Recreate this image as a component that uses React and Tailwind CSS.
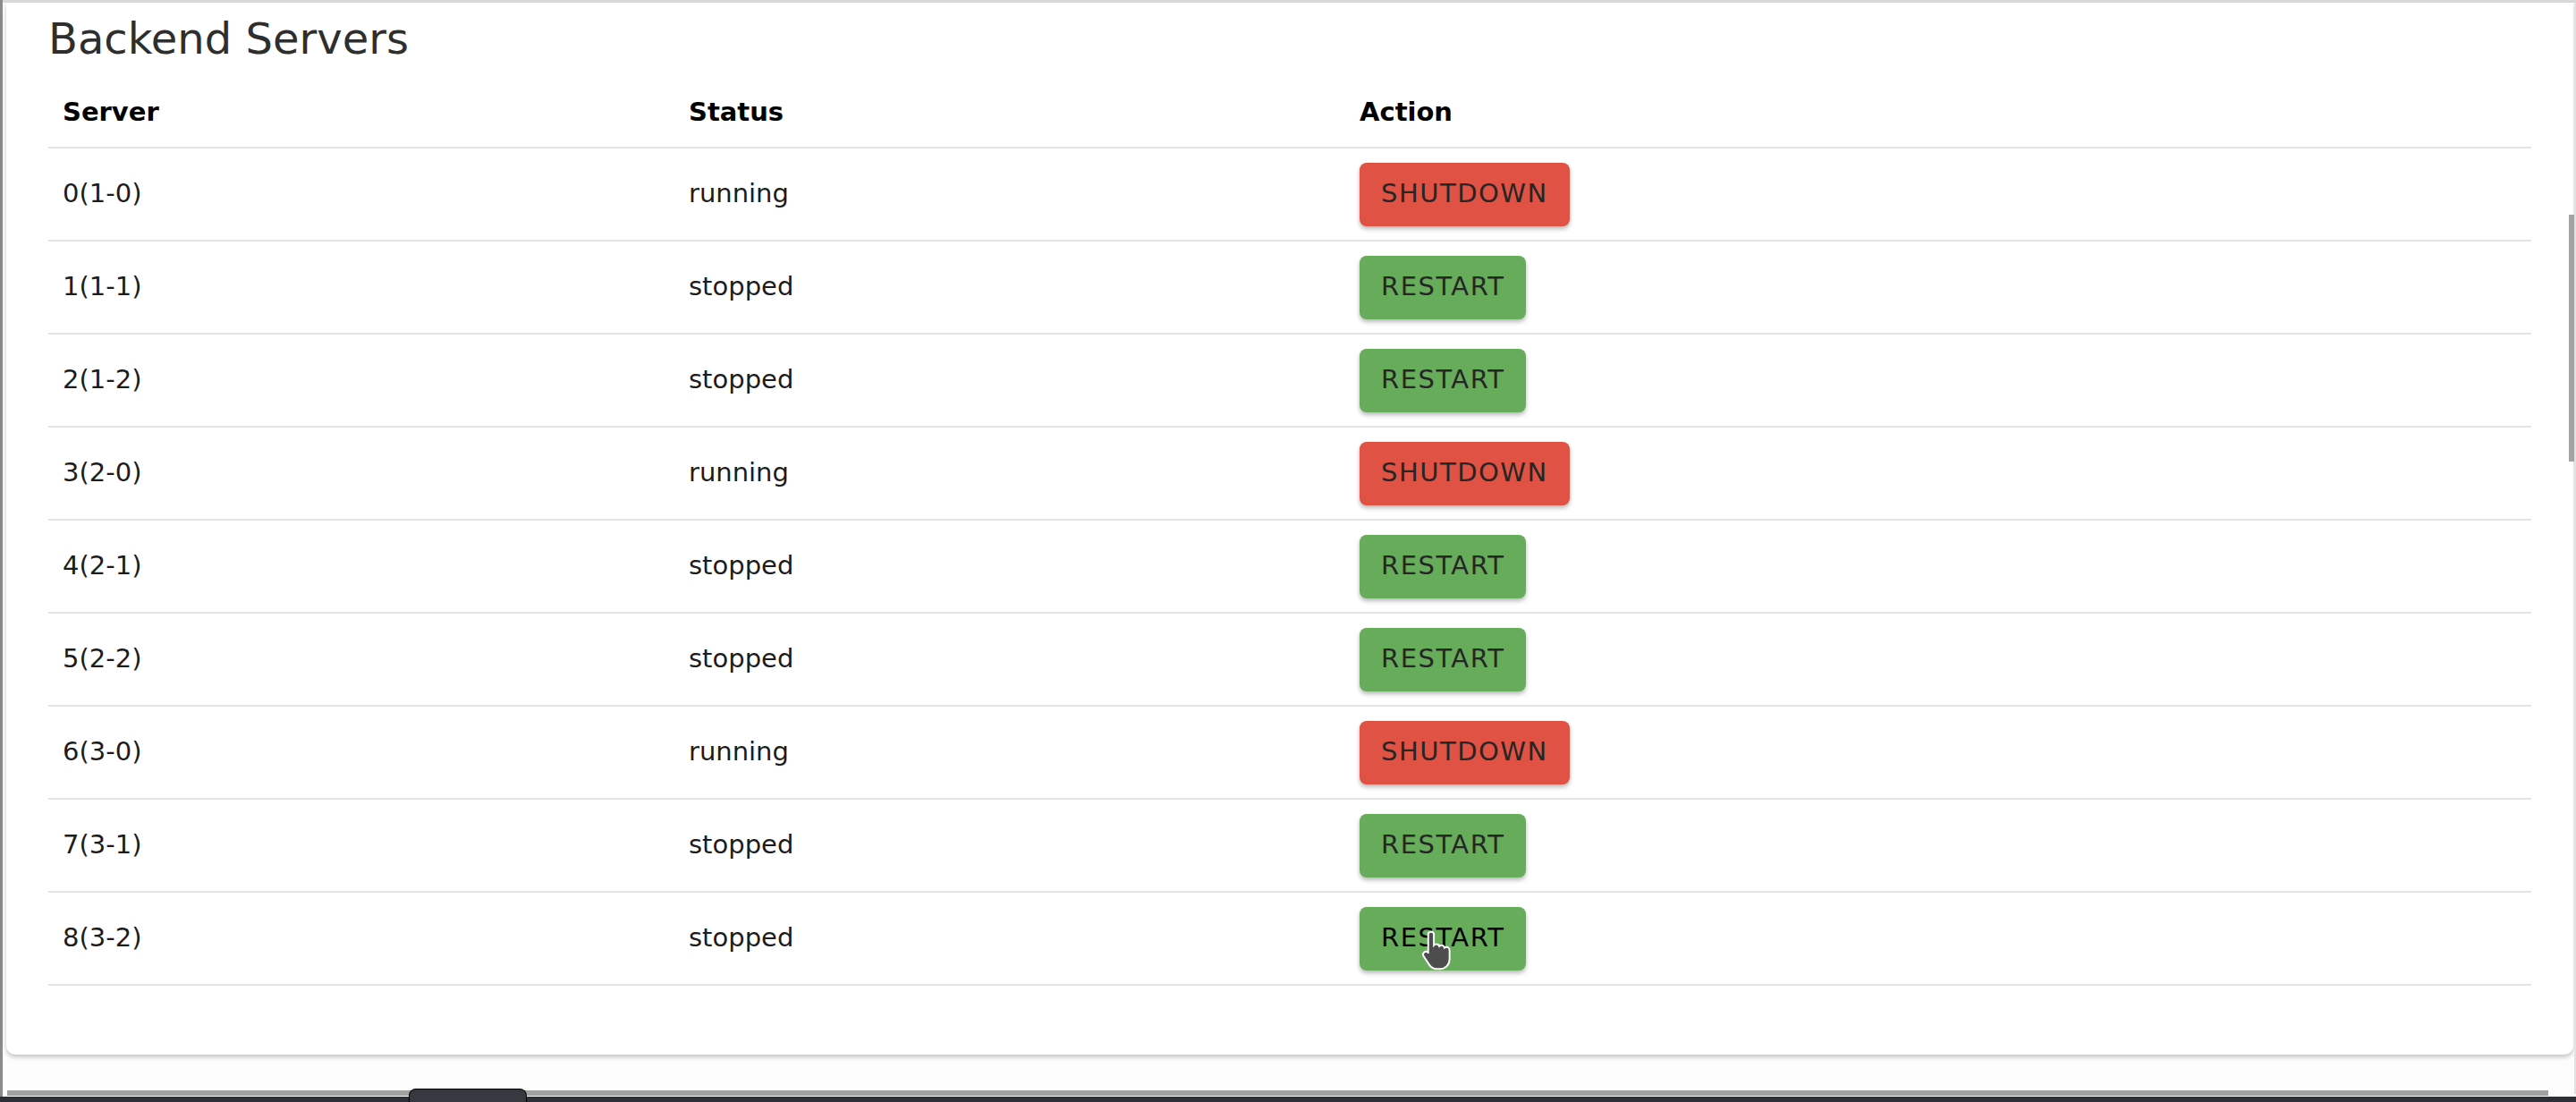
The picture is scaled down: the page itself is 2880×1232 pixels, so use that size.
const servers = [
  { name: "0(1-0)", status: "running" },
  { name: "1(1-1)", status: "stopped" },
  { name: "2(1-2)", status: "stopped" },
  { name: "3(2-0)", status: "running" },
  { name: "4(2-1)", status: "stopped" },
  { name: "5(2-2)", status: "stopped" },
  { name: "6(3-0)", status: "running" },
  { name: "7(3-1)", status: "stopped" },
  { name: "8(3-2)", status: "stopped" },
];

const HandCursor = () => (
  <svg
    className="absolute left-[1588px] top-[1039px] h-[46px] w-[38px]"
    viewBox="0 0 20 26"
  >
    <path
      d="M6 1.5c1 0 1.8.8 1.8 1.8V10c.4-.5 1-.7 1.6-.7.9 0 1.6.6 1.8 1.4.4-.4.9-.6 1.5-.6.9 0 1.6.6 1.8 1.5.4-.3.8-.4 1.3-.4 1.1 0 1.9.9 1.9 1.9V19c0 3.3-2.7 6-6 6H9.5c-1.8 0-3.4-.9-4.4-2.3L1.3 17c-.6-.9-.4-2 .4-2.6.8-.6 1.9-.5 2.5.3l0 .5V3.3C4.2 2.3 5 1.5 6 1.5z"
      fill="#4d4d4d"
      stroke="#ffffff"
      strokeWidth="1.1"
    />
  </svg>
);

const ActionButton = ({ running, hovered }) => (
  <button
    className={`h-[71px] rounded-[8px] px-[24px] text-[29px] tracking-[1.5px] shadow-[0_3px_5px_rgba(0,0,0,0.28)] ${
      running ? "bg-[#e05244]" : "bg-[#67ac5b]"
    } ${hovered ? "text-black" : "text-[#262626]"}`}
  >
    {running ? "SHUTDOWN" : "RESTART"}
  </button>
);

export default function App() {
  return (
    <div
      className="relative flex h-[1232px] w-[2880px] flex-col overflow-hidden bg-[#fdfdfd]"
      style={{ fontFamily: "'DejaVu Sans', sans-serif" }}
    >
      <div className="flex flex-1">
        <div className="w-[3px] bg-[#8a8a8a]" />
        <div className="flex flex-1 flex-col">
          <div className="h-[3px] bg-[#d9d9d9]" />
          <div className="ml-[4px] mr-[3px] rounded-b-[10px] bg-white px-[47px] pb-[77px] pt-[12px] shadow-[0_3px_5px_rgba(0,0,0,0.22)]">
            <h2 className="text-[48px] leading-[56px] text-[#2e2e2e]">
              Backend Servers
            </h2>
            <div className="grid h-[95px] grid-cols-[700px_750px_1fr] items-center border-b-2 border-[#e1e4e9] pl-[16px] pt-[16px] text-[29px] font-bold text-black">
              <div>Server</div>
              <div>Status</div>
              <div>Action</div>
            </div>
            {servers.map((s, i) => (
              <div
                key={s.name}
                className="grid h-[104px] grid-cols-[700px_750px_1fr] items-center border-b-2 border-[#e1e4e9] pl-[16px] text-[29px] text-[#1c1c1c]"
              >
                <div>{s.name}</div>
                <div>{s.status}</div>
                <div>
                  <ActionButton
                    running={s.status === "running"}
                    hovered={i === servers.length - 1}
                  />
                </div>
              </div>
            ))}
          </div>
          <div className="flex-1" />
          <div className="mb-[1px] ml-[5px] h-[6px] w-[2841px] bg-[#a1a1a1]" />
        </div>
      </div>
      <div className="relative h-[6px] bg-[#2c2f36]">
        <div className="absolute left-[457px] top-[-9px] h-[15px] w-[132px] rounded-t-[8px] border border-b-0 border-black bg-[#36393f]" />
      </div>
      <div className="absolute right-[2px] top-[240px] h-[276px] w-[6px] bg-[#a3a3a3]" />
      <div className="absolute right-0 top-[3px] h-[1220px] w-[2px] bg-[#e2e2e2]" />
      <HandCursor />
    </div>
  );
}
